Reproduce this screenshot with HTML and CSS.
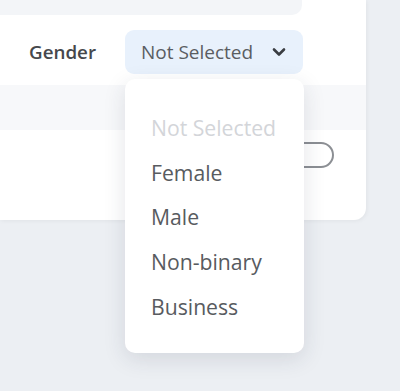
FILE: index.html
```html
<!DOCTYPE html>
<html lang="en">
<head>
  <meta charset="UTF-8" />
  <meta name="viewport" content="width=device-width, initial-scale=1.0"/>
  <title>Profile - Gender</title>
  <link rel="stylesheet" href="styles.css">
</head>
<body>
  <div class="page">
    <div class="card">
      <div class="top-box"></div>

      <div class="field-row">
        <label class="field-label">Gender</label>
        <div class="select-wrap">
          <div class="select">
            <span>Not Selected</span>
            <svg class="chevron" width="14" height="10" viewBox="0 0 14 10">
              <path d="M2 2.5 L7 7.5 L12 2.5" fill="none" stroke="#3a3d42" stroke-width="2.6" stroke-linecap="round" stroke-linejoin="round"/>
            </svg>
          </div>
          <ul class="dropdown">
            <li class="placeholder">Not Selected</li>
            <li>Female</li>
            <li>Male</li>
            <li>Non-binary</li>
            <li>Business</li>
          </ul>
        </div>
      </div>

      <div class="band"></div>

      <div class="toggle-row">
        <span class="toggle"></span>
      </div>
    </div>
  </div>
</body>
</html>
```

FILE: styles.css
```css
html, body {
  height: 100%;
}
body {
  margin: 0;
  background: #eceff3;
  font-family: 'Open Sans', 'Noto Sans', sans-serif;
  color: #444;
}
.page {
  min-height: 391px;
}
.card {
  width: 366px;
  height: 220px;
  background: white;
  border-radius: 0 0 12px 0;
  box-shadow: 1px 1px 4px rgba(0, 0, 0, 0.05);
}
.top-box {
  width: 302px;
  height: 15px;
  background: #f3f5f8;
  border-radius: 0 0 10px 0;
}
.field-row {
  display: flex;
  align-items: center;
  gap: 24px;
  height: 66px;
  padding: 4px 0 0 29px;
}
.field-label {
  width: 72px;
  font-size: 18.8px;
  font-weight: 600;
  color: #46484c;
}
.select-wrap {
  position: relative;
}
.select {
  display: flex;
  align-items: center;
  justify-content: space-between;
  box-sizing: border-box;
  width: 178px;
  height: 44px;
  padding: 0 17px 0 16px;
  background: #e8f1fc;
  border-radius: 9px;
  font-size: 19px;
  color: #5a5d62;
}
.dropdown {
  position: absolute;
  top: 49px;
  left: 0;
  z-index: 2;
  box-sizing: border-box;
  width: 179px;
  height: 274px;
  margin: 0;
  padding: 27px 0 0 26px;
  list-style: none;
  background: white;
  border-radius: 10px;
  box-shadow: 0 6px 22px rgba(40, 50, 70, 0.13);
}
.dropdown li {
  height: 44.7px;
  line-height: 44.7px;
  font-size: 21.2px;
  color: #585b60;
}
.dropdown .placeholder {
  color: #d3d5d9;
}
.band {
  height: 45px;
  background: #f7f8fa;
}
.toggle-row {
  display: flex;
  justify-content: flex-end;
  padding: 12px 32px 0 0;
}
.toggle {
  display: block;
  box-sizing: border-box;
  width: 50px;
  height: 26px;
  border: 2px solid #8c8f94;
  border-radius: 13px;
}
```
